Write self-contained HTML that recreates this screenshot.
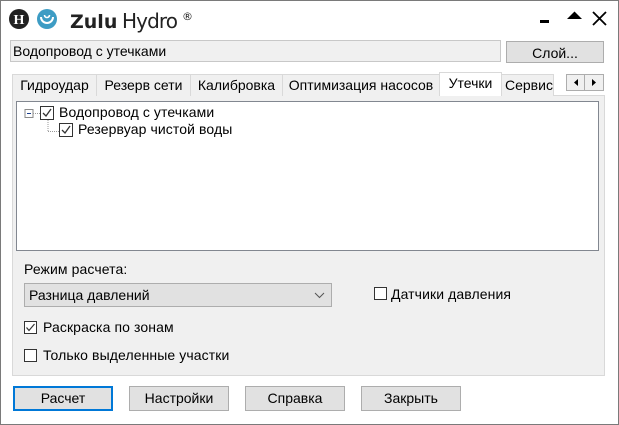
<!DOCTYPE html>
<html><head><meta charset="utf-8"><style>
*{margin:0;padding:0;box-sizing:border-box}
body{width:619px;height:425px;background:#fff;font-family:"Liberation Sans",sans-serif;font-size:14px;color:#000;position:relative;overflow:hidden}
.a{position:absolute}
.win{left:0;top:0;width:619px;height:425px;border:1px solid #7a7a7a}
.btn{position:absolute;background:#e1e1e1;border:1px solid #adadad;text-align:center;line-height:22px;font-size:14px}
.tab{position:absolute;top:74px;height:22px;border:1px solid #d9d9d9;border-bottom:none;background:#f0f0f0;line-height:21px;text-align:center;font-size:14px;white-space:nowrap}
.cb{position:absolute;width:13px;height:13px;border:1px solid #333;background:#fff}
.lbl{position:absolute;font-size:14px;white-space:nowrap;letter-spacing:0.1px}
</style></head><body>
<div class="a win"></div>
<svg class="a" style="left:0;top:0" width="200" height="40">
<circle cx="19" cy="19" r="10" fill="#222"/>
<text x="19" y="24" font-family="Liberation Serif" font-weight="bold" font-size="14" fill="#fff" text-anchor="middle">H</text>
<circle cx="47" cy="19" r="10" fill="#3d9cc4"/>
<path d="M41 17 A6 6 0 0 0 53 17" stroke="#fff" stroke-width="2" fill="none"/>
<path d="M44.5 15 A2.5 2.5 0 0 0 49.5 15" stroke="#fff" stroke-width="1.6" fill="none"/>
<text x="70" y="28" font-family="DejaVu Sans" font-weight="bold" font-size="19" fill="#222">Zulu</text>
<text x="122" y="28" font-family="DejaVu Sans" font-size="20" fill="#222" textLength="56">Hydro</text>
<text x="182" y="20" font-family="DejaVu Sans" font-size="11" fill="#222">®</text>
</svg>
<svg class="a" style="left:530px;top:8px" width="85" height="22">
<rect x="10" y="12" width="9" height="3" fill="#000"/>
<path d="M37 11 L44.5 3.5 L52 11 Z" fill="#000"/>
<path d="M63 4 L76 17 M76 4 L63 17" stroke="#000" stroke-width="1.8"/>
</svg>
<div class="a" style="left:10px;top:40px;width:491px;height:22px;background:#f0f0f0;border:1px solid #c8c8c8;padding:2px 2px;font-size:14px">Водопровод с утечками</div>
<div class="btn" style="left:506px;top:41px;width:98px;height:22px">Слой...</div>
<div class="a" style="left:12px;top:95px;width:593px;height:281px;background:#f0f0f0;border:1px solid #d9d9d9"></div>
<div class="tab" style="left:12px;width:85px">Гидроудар</div>
<div class="tab" style="left:96px;width:95px">Резерв сети</div>
<div class="tab" style="left:190px;width:93px">Калибровка</div>
<div class="tab" style="left:282px;width:158px">Оптимизация насосов</div>
<div class="tab" style="left:439px;top:72px;height:24px;width:63px;background:#fff;border-color:#d9d9d9">Утечки</div>
<div class="tab" style="left:501px;width:53px;overflow:hidden;text-align:left;padding-left:3px">Сервис</div>
<div class="a" style="left:566px;top:74px;width:38px;height:17px;background:#f0f0f0;border:1px solid #adadad"></div>
<div class="a" style="left:584px;top:74px;width:1px;height:17px;background:#adadad"></div>
<svg class="a" style="left:566px;top:74px" width="38" height="17"><path d="M12 5 L8 8.5 L12 12Z M26 5 L30 8.5 L26 12Z" fill="#000"/></svg>
<div class="a" style="left:16px;top:101px;width:583px;height:150px;background:#fff;border:1px solid #828790"></div>
<svg class="a" style="left:16px;top:101px" width="240" height="40">
<rect x="9" y="8.5" width="8" height="8" fill="#fff" stroke="#8a8a8a"/>
<path d="M11 12.5 H15" stroke="#1a3e8c"/>
<path d="M17 12.5 H24 M32 19 V30 M32 30.5 H43" stroke="#999" stroke-dasharray="1 1"/>
<rect x="24.5" y="5.5" width="13" height="13" fill="#fff" stroke="#333"/>
<path d="M27 12 L30 15 L35 8" stroke="#333" stroke-width="1.3" fill="none"/>
<rect x="43.5" y="22.5" width="13" height="13" fill="#fff" stroke="#333"/>
<path d="M46 29 L49 32 L54 25" stroke="#333" stroke-width="1.3" fill="none"/>
</svg>
<div class="lbl" style="left:59px;top:104px">Водопровод с утечками</div>
<div class="lbl" style="left:78px;top:121px">Резервуар чистой воды</div>
<div class="lbl" style="left:24px;top:261px">Режим расчета:</div>
<div class="a" style="left:24px;top:283px;width:308px;height:24px;background:#e1e1e1;border:1px solid #adadad;padding:3px 4px">Разница давлений</div>
<svg class="a" style="left:314px;top:290px" width="12" height="10"><path d="M1 3 L5.5 7.5 L10 3" stroke="#555" fill="none"/></svg>
<div class="cb" style="left:374px;top:287px"></div>
<div class="lbl" style="left:391px;top:286px">Датчики давления</div>
<div class="cb" style="left:24px;top:321px"></div>
<svg class="a" style="left:24px;top:321px" width="13" height="13"><path d="M2.5 6.5 L5 9.5 L10.5 3" stroke="#333" stroke-width="1.2" fill="none"/></svg>
<div class="lbl" style="left:43px;top:319px">Раскраска по зонам</div>
<div class="cb" style="left:24px;top:349px"></div>
<div class="lbl" style="left:43px;top:347px">Только выделенные участки</div>
<div class="btn" style="left:13px;top:386px;width:100px;height:25px;border:2px solid #0078d7;line-height:21px">Расчет</div>
<div class="btn" style="left:129px;top:386px;width:100px;height:25px">Настройки</div>
<div class="btn" style="left:245px;top:386px;width:100px;height:25px">Справка</div>
<div class="btn" style="left:361px;top:386px;width:100px;height:25px">Закрыть</div>
</body></html>
